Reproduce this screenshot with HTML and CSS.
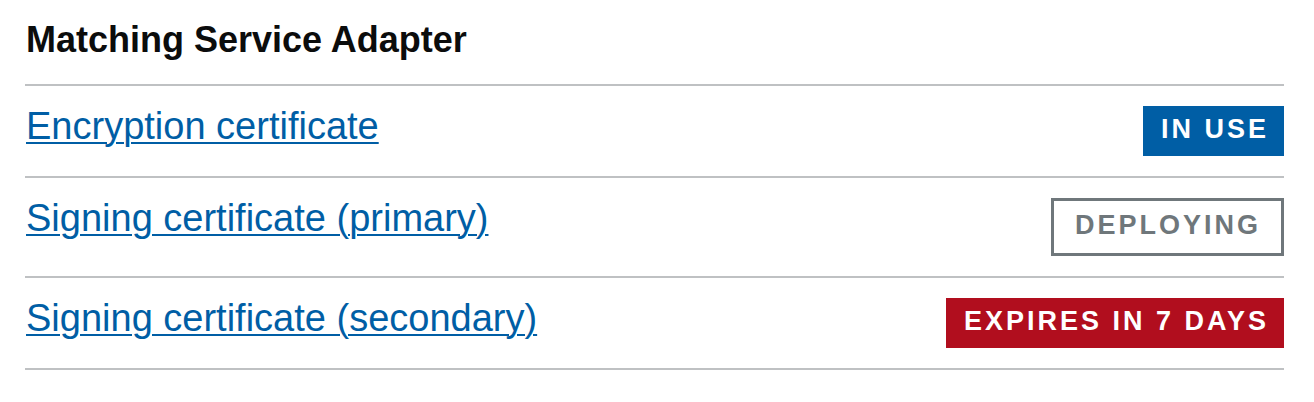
FILE: index.html
```html
<!DOCTYPE html>
<html lang="en">
<head>
    <meta charset="UTF-8">
    <meta name="viewport" content="width=device-width, initial-scale=1.0">
    <title>Certificates</title>
    <link rel="stylesheet" href="styles.css">
</head>
<body>
    <div class="panel">
        <h2 class="heading">Matching Service Adapter</h2>
        <ul class="cert-list">
            <li class="cert-row">
                <a href="#" class="cert-link">Encryption certificate</a>
                <strong class="tag tag-blue">In use</strong>
            </li>
            <li class="cert-row">
                <a href="#" class="cert-link">Signing certificate (primary)</a>
                <strong class="tag tag-grey">Deploying</strong>
            </li>
            <li class="cert-row">
                <a href="#" class="cert-link">Signing certificate (secondary)</a>
                <strong class="tag tag-red">Expires in 7 days</strong>
            </li>
        </ul>
    </div>
</body>
</html>
```

FILE: styles.css
```css
body {
    margin: 0;
    background: #ffffff;
    font-family: "Liberation Sans", Arial, sans-serif;
    color: #0b0c0c;
}

.panel {
    width: 1259px;
    margin-left: 25px;
}

.heading {
    margin: 20px 0 24px 1px;
    font-size: 36px;
    line-height: 40px;
    font-weight: 700;
}

.cert-list {
    list-style: none;
    margin: 0;
    padding: 0;
    border-bottom: 2px solid #bfc1c3;
}

.cert-row {
    display: flex;
    justify-content: space-between;
    align-items: flex-start;
    padding: 20px 0;
    border-top: 2px solid #bfc1c3;
}

.cert-link {
    margin-left: 1px;
    font-size: 38px;
    line-height: 40px;
    color: #005ea5;
    text-decoration: underline;
    text-decoration-thickness: 2px;
    text-underline-offset: 3px;
}

.tag {
    display: inline-block;
    padding: 0 15px 3px 18px;
    font-size: 27px;
    line-height: 47px;
    font-weight: 700;
    letter-spacing: 3px;
    text-transform: uppercase;
    color: #ffffff;
}

.tag-blue {
    background: #005ea5;
}

.tag-red {
    background: #b10e1e;
}

.tag-grey {
    padding: 0 20px 3px 21px;
    line-height: 49px;
    border: 3px solid #6f777b;
    color: #6f777b;
    background: #ffffff;
}
```
